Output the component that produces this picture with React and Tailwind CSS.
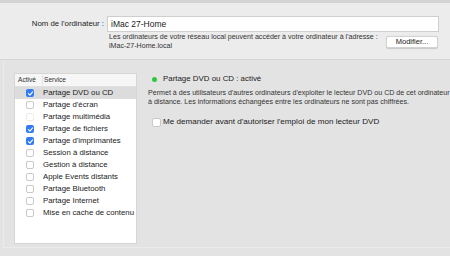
const services = [
  { name: "Partage DVD ou CD", on: true, selected: true },
  { name: "Partage d'écran", on: false },
  { name: "Partage multimédia", on: false, faint: true },
  { name: "Partage de fichiers", on: true },
  { name: "Partage d'imprimantes", on: true },
  { name: "Session à distance", on: false },
  { name: "Gestion à distance", on: false },
  { name: "Apple Events distants", on: false },
  { name: "Partage Bluetooth", on: false },
  { name: "Partage Internet", on: false },
  { name: "Mise en cache de contenu", on: false },
];

function Check({ on, faint, size = "w-[8px] h-[8px]" }) {
  if (on) {
    return (
      <span className={`${size} rounded-[2px] bg-[#2f7cf6] flex items-center justify-center`}>
        <svg viewBox="0 0 10 10" className="w-[7px] h-[7px]">
          <path d="M2 5.2 L4.2 7.4 L8 2.6" stroke="white" strokeWidth="1.6" fill="none" strokeLinecap="round" strokeLinejoin="round" />
        </svg>
      </span>
    );
  }
  return (
    <span
      className={`${size} rounded-[2px] bg-white border ${faint ? "border-[#ececec]" : "border-[#c9c9c9]"}`}
    />
  );
}

export default function App() {
  return (
    <div
      className="w-[450px] h-[256px] overflow-hidden bg-[#e3e3e3] text-[#222]"
      style={{ fontFamily: '"Liberation Sans", Arial, sans-serif' }}
    >
      {/* Computer name */}
      <div className="h-[60px] bg-[#ececec] border-t-[3px] border-t-[#d3d3d3] border-b border-b-[#d6d6d6] flex pt-[13px]">
        <div className="w-[107px] pr-[3px] text-right text-[7.8px] leading-[16px] whitespace-nowrap">Nom de l'ordinateur :</div>
        <div className="flex-1 pr-[10px]">
          <div className="h-[16px] w-[332px] bg-white border border-[#cfcfcf] pl-[3px] text-[8.5px] leading-[14px]">
            iMac 27-Home
          </div>
          <div className="flex items-start">
            <div className="pt-[1px] pl-[2px] text-[7.1px] leading-[9px] text-[#333] w-[279px] whitespace-nowrap">
              <div>Les ordinateurs de votre réseau local peuvent accéder à votre ordinateur à l'adresse :</div>
              <div>iMac-27-Home.local</div>
            </div>
            <div className="mt-[4px] h-[12px] w-[52px] bg-white rounded-[2px] border border-[#d2d2d2] shadow-[0_0.5px_1px_rgba(0,0,0,0.15)] text-[7.5px] leading-[10px] text-center">
              Modifier...
            </div>
          </div>
        </div>
      </div>

      {/* Lower panel */}
      <div className="ml-[3px] h-[188px] border-l border-b border-[#ebebeb] flex pt-[13px] pl-[10px]">
        <div className="w-[123px] h-[171px] bg-white border border-[#d6d6d6] flex flex-col">
          <div className="h-[13px] flex items-center bg-[#f6f6f6] border-b border-[#e0e0e0] text-[6.6px] text-[#333]">
            <span className="w-[28px] pl-[3px] border-r border-[#e2e2e2]">Activé</span>
            <span className="pl-[1px]">Service</span>
          </div>
          {services.map((s) => (
            <div
              key={s.name}
              className={`h-[12px] flex items-center text-[7.8px] whitespace-nowrap ${s.selected ? "bg-[#dcdcdc]" : ""}`}
            >
              <span className="w-[29px] flex justify-center pl-[1px]">
                <Check on={s.on} faint={s.faint} />
              </span>
              <span className="-ml-[1px]">{s.name}</span>
            </div>
          ))}
        </div>

        <div className="flex-1 pl-[11px] pt-[1px]">
          <div className="flex items-center h-[10px] pl-[4px]">
            <span className="w-[5px] h-[5px] rounded-full bg-[#2dc840] mr-[6px]" />
            <span className="text-[7.9px]">Partage DVD ou CD : activé</span>
          </div>
          <div className="mt-[5px] text-[7.1px] leading-[8.5px] text-[#333] whitespace-nowrap">
            <div>Permet à des utilisateurs d'autres ordinateurs d'exploiter le lecteur DVD ou CD de cet ordinateur</div>
            <div>à distance. Les informations échangées entre les ordinateurs ne sont pas chiffrées.</div>
          </div>
          <div className="mt-[10px] flex items-center pl-[4px]">
            <Check on={false} size="w-[9px] h-[9px]" />
            <span className="ml-[2px] text-[8.1px]">Me demander avant d'autoriser l'emploi de mon lecteur DVD</span>
          </div>
        </div>
      </div>
    </div>
  );
}
